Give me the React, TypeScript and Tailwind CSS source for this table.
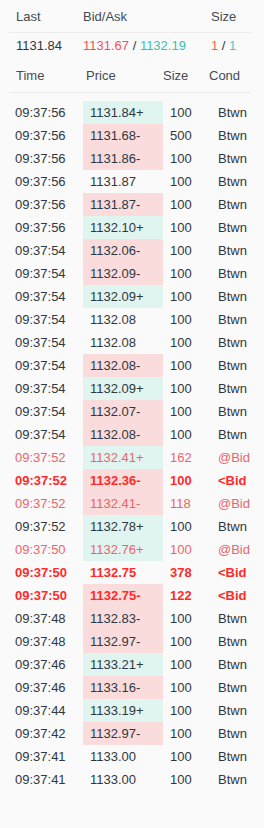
type Tone = "up" | "down" | "none";
type Kind = "normal" | "at" | "below";

interface Trade {
  time: string;
  price: string;
  tone: Tone;
  size: number;
  cond: string;
  kind: Kind;
}

const t = (time: string, price: string, tone: Tone, size = 100, cond = "Btwn", kind: Kind = "normal"): Trade => ({
  time,
  price,
  tone,
  size,
  cond,
  kind,
});

const trades: Trade[] = [
  t("09:37:56", "1131.84+", "up"),
  t("09:37:56", "1131.68-", "down", 500),
  t("09:37:56", "1131.86-", "down"),
  t("09:37:56", "1131.87", "none"),
  t("09:37:56", "1131.87-", "down"),
  t("09:37:56", "1132.10+", "up"),
  t("09:37:54", "1132.06-", "down"),
  t("09:37:54", "1132.09-", "down"),
  t("09:37:54", "1132.09+", "up"),
  t("09:37:54", "1132.08", "none"),
  t("09:37:54", "1132.08", "none"),
  t("09:37:54", "1132.08-", "down"),
  t("09:37:54", "1132.09+", "up"),
  t("09:37:54", "1132.07-", "down"),
  t("09:37:54", "1132.08-", "down"),
  t("09:37:52", "1132.41+", "up", 162, "@Bid", "at"),
  t("09:37:52", "1132.36-", "down", 100, "<Bid", "below"),
  t("09:37:52", "1132.41-", "down", 118, "@Bid", "at"),
  t("09:37:52", "1132.78+", "up"),
  t("09:37:50", "1132.76+", "up", 100, "@Bid", "at"),
  t("09:37:50", "1132.75", "none", 378, "<Bid", "below"),
  t("09:37:50", "1132.75-", "down", 122, "<Bid", "below"),
  t("09:37:48", "1132.83-", "down"),
  t("09:37:48", "1132.97-", "down"),
  t("09:37:46", "1133.21+", "up"),
  t("09:37:46", "1133.16-", "down"),
  t("09:37:44", "1133.19+", "up"),
  t("09:37:42", "1132.97-", "down"),
  t("09:37:41", "1133.00", "none"),
  t("09:37:41", "1133.00", "none"),
];

const toneBg: Record<Tone, string> = {
  up: "bg-[#e0f4f0]",
  down: "bg-[#f9dcdb]",
  none: "",
};

const kindText: Record<Kind, string> = {
  normal: "text-[#2f3742]",
  at: "text-[#ec6468]",
  below: "text-[#ff2a2a] font-bold",
};

export default function App() {
  return (
    <div
      className="min-h-screen bg-[#fafafa] text-[13px] text-[#2f3742]"
      style={{ fontFamily: '"Liberation Sans", Arial, sans-serif' }}
    >
      <div className="pl-[9px] pr-[13px]">
        {/* quote header */}
        <div className="grid h-[33px] grid-cols-[74px_128px_1fr] items-center border-b border-[#ececec] pt-[1px] text-[#444b55]">
          <span className="pl-[7px]">Last</span>
          <span>Bid/Ask</span>
          <span>Size</span>
        </div>
        <div className="grid h-[24px] grid-cols-[74px_128px_1fr] items-center pt-[1px]">
          <span className="pl-[7px]">1131.84</span>
          <span>
            <span className="text-[#e8555e]">1131.67</span> / <span className="text-[#3ebdb2]">1132.19</span>
          </span>
          <span>
            <span className="text-[#e8684a]">1</span> / <span className="text-[#4cc6cc]">1</span>
          </span>
        </div>

        {/* column heads */}
        <div className="mt-[8px] grid h-[22px] grid-cols-[74px_80px_46px_1fr] items-center text-[#444b55]">
          <span className="pl-[7px]">Time</span>
          <span className="pl-[3px]">Price</span>
          <span>Size</span>
          <span>Cond</span>
        </div>
        <div className="border-b border-[#ececec] pt-[5px]" />

        {/* time & sales */}
        <div className="pt-[8px]">
          {trades.map((r, i) => (
            <div key={i} className={`grid h-[23px] grid-cols-[74px_80px_48px_1fr] items-center ${kindText[r.kind]}`}>
              <span className="pl-[6px]">{r.time}</span>
              <span className={`flex h-full items-center pl-[7px] ${toneBg[r.tone]}`}>{r.price}</span>
              <span className="pl-[7px]">{r.size}</span>
              <span className="pl-[7px]">{r.cond}</span>
            </div>
          ))}
        </div>
      </div>
    </div>
  );
}
